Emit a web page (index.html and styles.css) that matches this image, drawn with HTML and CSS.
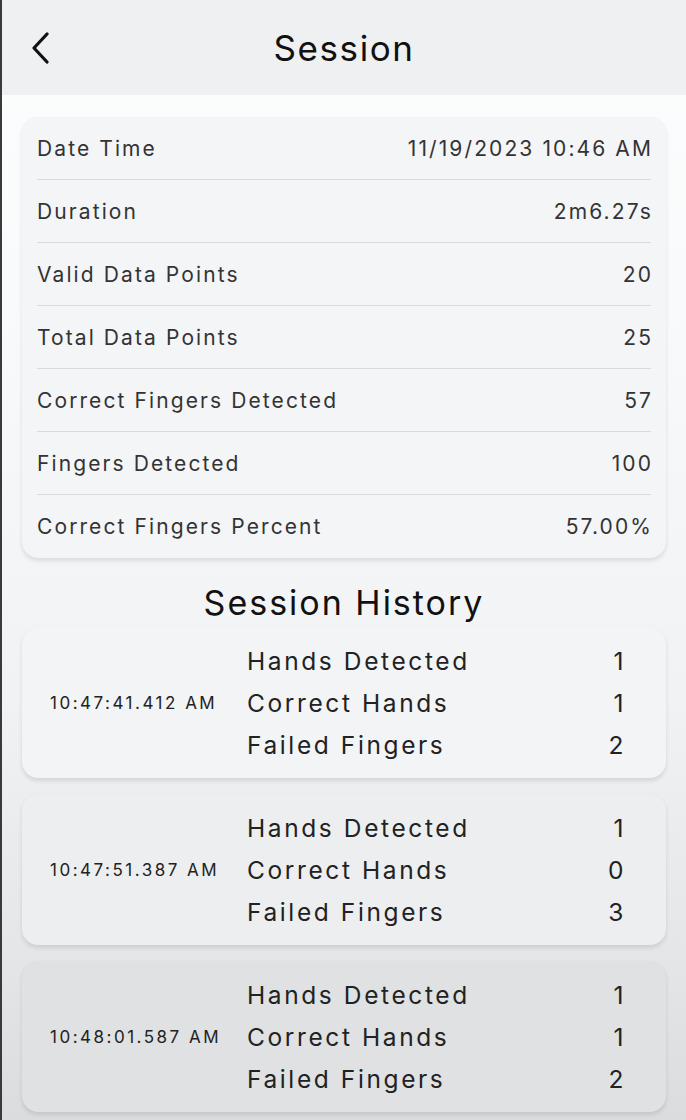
FILE: index.html
```html
<!DOCTYPE html>
<html>
<head>
<meta charset="utf-8">
<link rel="stylesheet" href="styles.css">
</head>
<body>
<div class="screen">
  <header class="header">
    <div class="back">
      <svg width="20" height="32" viewBox="0 0 20 32"><path d="M17 2 L4 16 L17 30" fill="none" stroke="#111" stroke-width="3.2" stroke-linecap="round" stroke-linejoin="round"/></svg>
    </div>
    <h1 class="title">Session</h1>
    <div></div>
  </header>

  <main class="content">
    <section class="card info">
      <div class="row"><span>Date Time</span><span>11/19/2023 10:46 AM</span></div>
      <div class="row"><span>Duration</span><span>2m6.27s</span></div>
      <div class="row"><span>Valid Data Points</span><span>20</span></div>
      <div class="row"><span>Total Data Points</span><span>25</span></div>
      <div class="row"><span>Correct Fingers Detected</span><span>57</span></div>
      <div class="row"><span>Fingers Detected</span><span>100</span></div>
      <div class="row"><span>Correct Fingers Percent</span><span>57.00%</span></div>
    </section>

    <h2 class="section-title">Session History</h2>

    <section class="card hist h1">
      <div class="time">10:47:41.412 AM</div>
      <div class="stats">
        <span>Hands Detected</span><span class="v">1</span>
        <span>Correct Hands</span><span class="v">1</span>
        <span>Failed Fingers</span><span class="v">2</span>
      </div>
    </section>
    <section class="card hist h2">
      <div class="time">10:47:51.387 AM</div>
      <div class="stats">
        <span>Hands Detected</span><span class="v">1</span>
        <span>Correct Hands</span><span class="v">0</span>
        <span>Failed Fingers</span><span class="v">3</span>
      </div>
    </section>
    <section class="card hist h3">
      <div class="time">10:48:01.587 AM</div>
      <div class="stats">
        <span>Hands Detected</span><span class="v">1</span>
        <span>Correct Hands</span><span class="v">1</span>
        <span>Failed Fingers</span><span class="v">2</span>
      </div>
    </section>
  </main>
</div>
</body>
</html>
```

FILE: styles.css
```css
* { box-sizing: border-box; }
html, body { margin: 0; padding: 0; }
body {
  font-family: Inter, "Noto Sans", "Liberation Sans", sans-serif;
  color: #2b2b2b;
  background: #e0e2e4;
}
.screen {
  width: 686px;
  height: 1120px;
  overflow: hidden;
  border-left: 2px solid #3a3a3a;
  background: linear-gradient(to bottom, #fcfdfd 0px, #f9fafb 300px, #f1f2f3 700px, #e4e6e8 950px, #dadcde 1120px);
}
.header {
  height: 95px;
  background: #eef0f2;
  display: grid;
  grid-template-columns: 1fr auto 1fr;
  align-items: center;
}
.back {
  padding-left: 28px;
  display: flex;
  align-items: center;
}
.title {
  margin: 0;
  font-weight: 400;
  font-size: 35px;
  letter-spacing: 1.6px;
  color: #111;
}
.content {
  padding: 22px 20px 0 20px;
  display: flex;
  flex-direction: column;
}
.card {
  border-radius: 16px;
  box-shadow: 0 3px 4px rgba(0,0,0,0.10), 0 0 1px rgba(0,0,0,0.05);
}
.info {
  background: #f3f5f7;
  padding: 0 15px;
}
.row {
  height: 63px;
  display: flex;
  justify-content: space-between;
  align-items: center;
  font-size: 21px;
  letter-spacing: 2.1px;
  color: #333;
  border-bottom: 1.5px solid #d8dadc;
}
.row span:last-child { margin-right: -2px; }
.row:last-child { border-bottom: none; }
.section-title {
  margin: 21px 0 0;
  text-align: center;
  font-weight: 400;
  font-size: 34px;
  letter-spacing: 2px;
  color: #111;
  line-height: 48px;
}
.hist {
  height: 151px;
  display: flex;
  align-items: center;
  margin-bottom: 16px;
  padding: 0 42px 0 28px;
}
.h1 { background: #f2f4f6; }
.h2 { background: #eceef0; }
.h3 { background: #dfe1e3; }
.time {
  width: 197px;
  font-size: 17px;
  letter-spacing: 2.5px;
  color: #222;
}
.stats {
  flex: 1;
  display: grid;
  grid-template-columns: 1fr auto;
  font-size: 24.5px;
  letter-spacing: 2.6px;
  line-height: 42px;
  color: #222;
}
.v { text-align: right; margin-right: -2px; }
```
